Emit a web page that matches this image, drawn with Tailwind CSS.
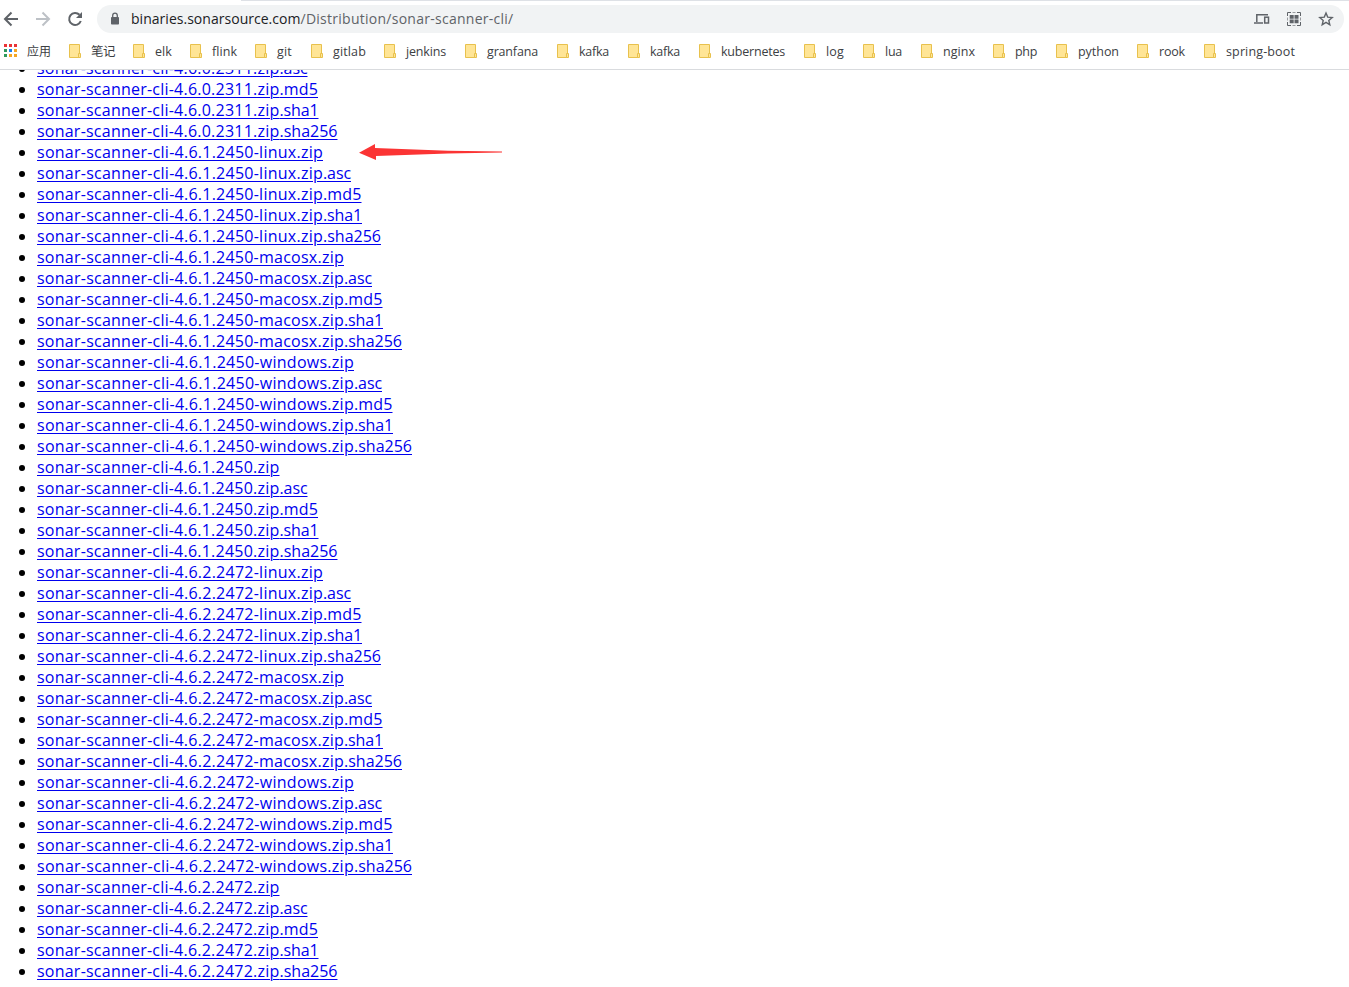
<!DOCTYPE html>
<html lang="zh-CN">
  <head>
    <meta charset="UTF-8" />
    <meta name="viewport" content="width=device-width, initial-scale=1.0" />
    <title>binaries.sonarsource.com</title>
    <script src="https://cdn.jsdelivr.net/npm/@tailwindcss/browser@4"></script>
  </head>

  <body class="h-screen overflow-hidden flex flex-col bg-white font-['Open_Sans','Noto_Sans_CJK_SC',sans-serif]">
    <header class="shrink-0 h-[70px] bg-white border-b border-[#d9dbde]">
      <div class="h-px bg-[#dee1e6] ml-[241px]"></div>

      <!-- Toolbar -->
      <div class="flex items-center h-9 pr-[5px]">
        <svg class="w-[97px] h-9 shrink-0" viewBox="0 1 97 36" fill="none">
          <path d="M18 19H5M11.5 12.5L5 19L11.5 25.5" stroke="#5f6368" stroke-width="2" />
          <path d="M36 19H49M42.5 12.5L49 19L42.5 25.5" stroke="#bdc1c6" stroke-width="2" />
          <path d="M79.5 14.8A6 6 0 1 0 80.8 21" stroke="#5f6368" stroke-width="2" />
          <path d="M82 12V18H76Z" fill="#5f6368" />
        </svg>
        <div class="flex items-center flex-1 h-7 rounded-full bg-[#f1f3f4]">
          <svg class="w-[34px] h-7 shrink-0" viewBox="97 5 34 28" fill="none">
            <rect x="111" y="17" width="8" height="7.5" rx="0.8" fill="#5f6368" />
            <path d="M112.7 17.5V15.5a2.3 2.3 0 0 1 4.6 0V17.5" stroke="#5f6368" stroke-width="1.3" />
          </svg>
          <div class="flex-1 text-[14px] leading-7 text-[#202124] whitespace-nowrap"><span id="host">binaries.sonarsource.com</span><span id="path" class="text-[#5f6368]">/Distribution/sonar-scanner-cli/</span></div>
          <svg class="w-[94px] h-7 shrink-0" viewBox="1250 5 94 28" fill="none">
            <g stroke="#5f6368" stroke-width="1.5">
              <path d="M1256.8 22V14.7H1268M1254 23H1263" />
              <rect x="1264.7" y="17.2" width="3.8" height="5.8" />
            </g>
            <path d="M1287.5 16V12.5H1291M1297 12.5H1300.5V16M1300.5 22V25.5H1297M1291 25.5H1287.5V22" stroke="#5f6368" />
            <path d="M1292.5 12.5H1295.5M1292.5 25.5H1295.5M1287.5 17.5V20.5M1300.5 17.5V20.5" stroke="#9a9da1" />
            <path d="M1289.7 15h4v3.7h-4zM1294.5 15h4v3.7h-4zM1289.7 19.5h4v3.7h-4zM1294.5 19.5h4v3.7h-4z" fill="#5f6368" />
            <path d="M1326 13L1327.7 17.1L1332.2 17.5L1328.8 20.4L1329.8 24.8L1326 22.4L1322.2 24.8L1323.2 20.4L1319.8 17.5L1324.3 17.1Z" stroke="#5f6368" stroke-width="1.4" />
          </svg>
        </div>
      </div>

      <!-- Bookmarks bar -->
      <div class="flex items-center h-[29px] text-[12.5px] leading-5 text-[#3c4043] whitespace-nowrap">
        <div class="flex items-center w-[69px] shrink-0 pl-1">
          <svg class="w-[13px] h-[13px] mr-2.5 -mt-0.5" viewBox="0 0 13 13">
            <path d="M0 0h3v3H0zM5 0h3v3H5zM10 0h3v3h-3z" fill="#ea3335" />
            <path d="M5 5h3v3H5z" fill="#1a80f0" />
            <path d="M10 5h3v3h-3zM10 10h3v3h-3zM5 10h3v3H5z" fill="#f5a623" />
            <path d="M0 5h3v3H0zM0 10h3v3H0z" fill="#2e9a5c" />
          </svg>
          <span class="text-[12px]">应用</span>
        </div>
        <div id="bookmarks" class="flex items-center"></div>
      </div>
    </header>

    <main class="flex-1 overflow-hidden">
      <div class="flex -mt-3">
        <ul id="files" class="list-none text-[16px] leading-[21px] text-black whitespace-nowrap"></ul>
        <svg class="w-[146px] h-5 absolute left-[358px] top-[142px]" viewBox="358 142 146 20">
          <path d="M359 152.7L375 144V148L448 150.7L502 151.5V152.5L448 153.5L376 156V160Z" fill="#fb3434" />
        </svg>
      </div>
    </main>

    <script>
      // [label, width of the entry, width of the label]
      const bookmarks = [
        ["笔记", 64, 24],
        ["elk", 57, 17],
        ["flink", 65, 25],
        ["git", 56, 15],
        ["gitlab", 73, 33],
        ["jenkins", 81, 40],
        ["granfana", 92, 51],
        ["kafka", 71, 30],
        ["kafka", 71, 30],
        ["kubernetes", 105, 64],
        ["log", 59, 18],
        ["lua", 58, 17],
        ["nginx", 72, 32],
        ["php", 63, 22],
        ["python", 81, 41],
        ["rook", 67, 26],
        ["spring-boot", 91, 69],
      ];

      const folderIcon = `
        <svg class="w-[13px] h-[15px] mr-[9px] shrink-0" viewBox="0 0 13 15">
          <path d="M.5.5h10v13H.5z" fill="#ffe596" stroke="#e8c14d" />
          <path d="M9.5 9.5h2v4h-2z" fill="#ffe596" stroke="#e8c14d" />
        </svg>`;

      // Spread the letters so that the text takes the given width
      function fitText(el, width) {
        const actual = el.getBoundingClientRect().width;
        el.style.letterSpacing = (width - actual) / el.textContent.length + "px";
      }

      function renderBookmarks() {
        const bar = document.getElementById("bookmarks");
        bookmarks.forEach(([label, width, textWidth]) => {
          const item = document.createElement("a");
          item.className = "flex items-center shrink-0";
          item.style.width = width + "px";
          item.innerHTML = `${folderIcon}<span>${label}</span>`;
          bar.appendChild(item);
          fitText(item.querySelector("span"), textWidth);
        });
      }

      // Width of each package name, and of each extension after it
      const packages = [
        ["4.6.1.2450-linux", 286],
        ["4.6.1.2450-macosx", 307],
        ["4.6.1.2450-windows", 317],
        ["4.6.1.2450", 242.5],
        ["4.6.2.2472-linux", 286],
        ["4.6.2.2472-macosx", 307],
        ["4.6.2.2472-windows", 317],
        ["4.6.2.2472", 242.5],
      ];
      const hashes = [
        [".asc", 28],
        [".md5", 38.5],
        [".sha1", 39],
        [".sha256", 58],
      ];

      function renderFiles() {
        const rows = hashes.map(([ext, w]) => ["4.6.0.2311", ext, 242.5, w]);
        packages.forEach(([name, width]) => {
          rows.push([name, "", width, 0]);
          hashes.forEach(([ext, w]) => rows.push([name, ext, width, w]));
        });

        const list = document.getElementById("files");
        rows.forEach(([name, ext, width, extWidth]) => {
          const li = document.createElement("li");
          li.className = "flex items-center h-[21px] pl-[19px]";
          li.innerHTML = `
            <span class="w-1.5 h-1.5 mr-3 rounded-full bg-black"></span>
            <a class="text-[#0000ee] underline decoration-1 underline-offset-2"><span>sonar-scanner-cli-${name}.zip</span><span>${ext}</span></a>`;
          list.appendChild(li);
          const parts = li.querySelectorAll("a span");
          fitText(parts[0], width);
          if (ext) fitText(parts[1], extWidth);
        });
      }

      // Text can only be measured once the styles are in place
      window.addEventListener("load", () => {
        renderBookmarks();
        renderFiles();
        fitText(document.getElementById("host"), 169.5);
        fitText(document.getElementById("path"), 213);
      });
    </script>
  </body>
</html>
